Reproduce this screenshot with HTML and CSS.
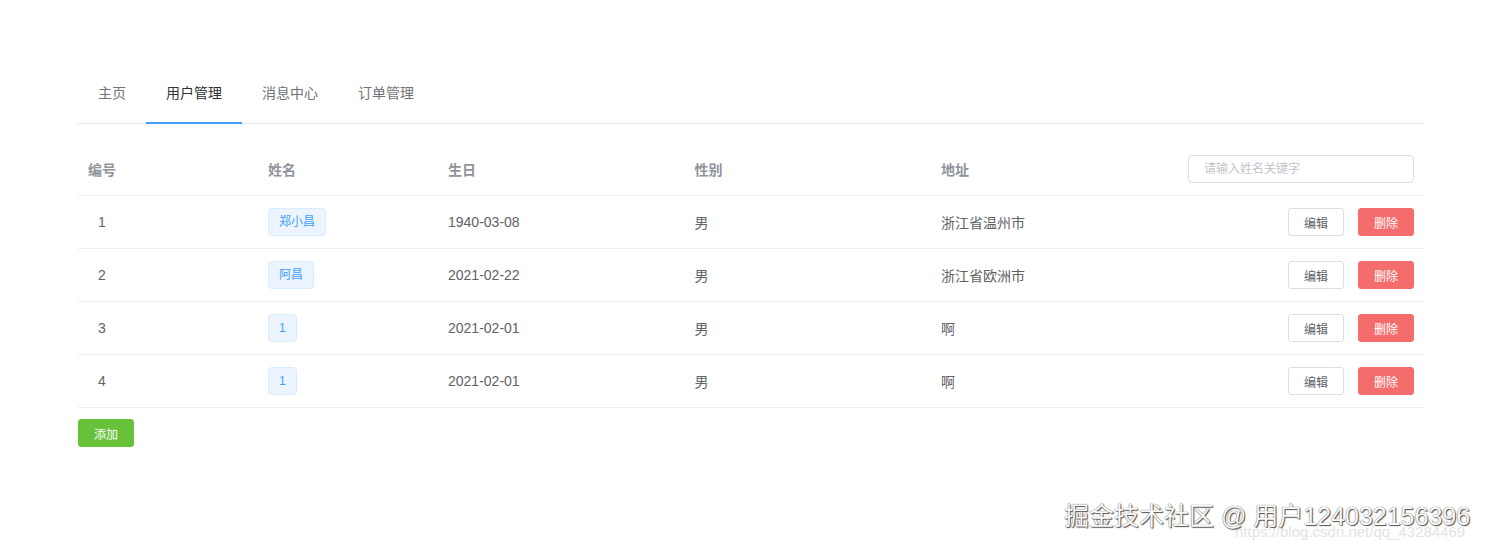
FILE: index.html
```html
<!DOCTYPE html>
<html>
    <head>
        <title>用户管理</title>
        <link rel="stylesheet" href="styles.css">
    </head>
    <body>
        <div class="page">
            <div class="tabs">
                <div class="tab">主页</div>
                <div class="tab tab-active">用户管理</div>
                <div class="tab">消息中心</div>
                <div class="tab">订单管理</div>
            </div>

            <div class="table">
                <div class="row head-row">
                    <div class="cell">编号</div>
                    <div class="cell">姓名</div>
                    <div class="cell">生日</div>
                    <div class="cell">性别</div>
                    <div class="cell">地址</div>
                    <div class="cell cell-right">
                        <input class="search-input" placeholder="请输入姓名关键字">
                    </div>
                </div>
                <div class="row">
                    <div class="cell cell-id">1</div>
                    <div class="cell"><span class="tag">郑小昌</span></div>
                    <div class="cell">1940-03-08</div>
                    <div class="cell">男</div>
                    <div class="cell">浙江省温州市</div>
                    <div class="cell cell-right">
                        <button class="btn">编辑</button>
                        <button class="btn btn-danger">删除</button>
                    </div>
                </div>
                <div class="row">
                    <div class="cell cell-id">2</div>
                    <div class="cell"><span class="tag">阿昌</span></div>
                    <div class="cell">2021-02-22</div>
                    <div class="cell">男</div>
                    <div class="cell">浙江省欧洲市</div>
                    <div class="cell cell-right">
                        <button class="btn">编辑</button>
                        <button class="btn btn-danger">删除</button>
                    </div>
                </div>
                <div class="row">
                    <div class="cell cell-id">3</div>
                    <div class="cell"><span class="tag">1</span></div>
                    <div class="cell">2021-02-01</div>
                    <div class="cell">男</div>
                    <div class="cell">啊</div>
                    <div class="cell cell-right">
                        <button class="btn">编辑</button>
                        <button class="btn btn-danger">删除</button>
                    </div>
                </div>
                <div class="row">
                    <div class="cell cell-id">4</div>
                    <div class="cell"><span class="tag">1</span></div>
                    <div class="cell">2021-02-01</div>
                    <div class="cell">男</div>
                    <div class="cell">啊</div>
                    <div class="cell cell-right">
                        <button class="btn">编辑</button>
                        <button class="btn btn-danger">删除</button>
                    </div>
                </div>
            </div>

            <button class="btn btn-success">添加</button>
        </div>

        <div class="mark-csdn">https://blog.csdn.net/qq_43284469</div>
        <div class="mark-juejin">掘金技术社区 @ 用户124032156396</div>
    </body>
</html>
```

FILE: styles.css
```css
body{
    margin: 0;
    background-color: #fff;
    font-family: "Liberation Sans", "Noto Sans CJK SC", sans-serif;
    font-size: 14px;
    color: #606266;
}
.page{
    width: 1346px;
    padding: 73px 0 0 78px;
}
.tabs{
    display: flex;
    height: 50px;
    border-bottom: 1px solid #e4e7ed;
    margin-bottom: 19px;
}
.tab{
    padding: 0 20px 10px 20px;
    line-height: 40px;
    height: 50px;
    color: #707378;
    box-sizing: border-box;
}
.tab-active{
    color: #303133;
    border-bottom: 2px solid #409eff;
    height: 51px;
}
.row{
    display: grid;
    grid-template-columns: 180px 180px 1fr 1fr 1fr 1fr;
    height: 52px;
    border-bottom: 1px solid #ebeef5;
}
.cell{
    display: flex;
    align-items: center;
    padding: 0 10px;
}
.head-row{
    color: #909399;
    font-weight: bold;
}
.cell-id{
    padding-left: 20px;
}
.cell-right{
    justify-content: flex-end;
}
.tag{
    display: inline-block;
    height: 28px;
    line-height: 26px;
    padding: 0 10px;
    font-size: 12px;
    color: #409eff;
    background-color: #ecf5ff;
    border: 1px solid #d9ecff;
    border-radius: 4px;
    box-sizing: border-box;
}
.search-input{
    width: 226px;
    height: 28px;
    box-sizing: border-box;
    padding: 0 15px;
    border: 1px solid #dcdfe6;
    border-radius: 4px;
    font-family: inherit;
    font-size: 12px;
    color: #606266;
    outline: none;
}
.search-input::placeholder{
    color: #c0c4cc;
}
.btn{
    height: 28px;
    padding: 0 15px;
    font-family: inherit;
    font-size: 12px;
    color: #606266;
    background-color: #fff;
    border: 1px solid #dcdfe6;
    border-radius: 3px;
    cursor: pointer;
}
.btn-danger{
    margin-left: 14px;
    color: #fff;
    background-color: #f56c6c;
    border-color: #f56c6c;
}
.btn-success{
    margin-top: 11px;
    color: #fff;
    background-color: #67c23a;
    border-color: #67c23a;
}
.mark-csdn{
    position: absolute;
    left: 1235px;
    top: 523px;
    font-size: 15px;
    color: #e3e3e3;
}
.mark-juejin{
    position: absolute;
    left: 1064px;
    top: 496px;
    font-size: 25px;
    color: #fafafa;
    text-shadow: 0 0 1px #333, 1px 1px 1px #555;
}
```
